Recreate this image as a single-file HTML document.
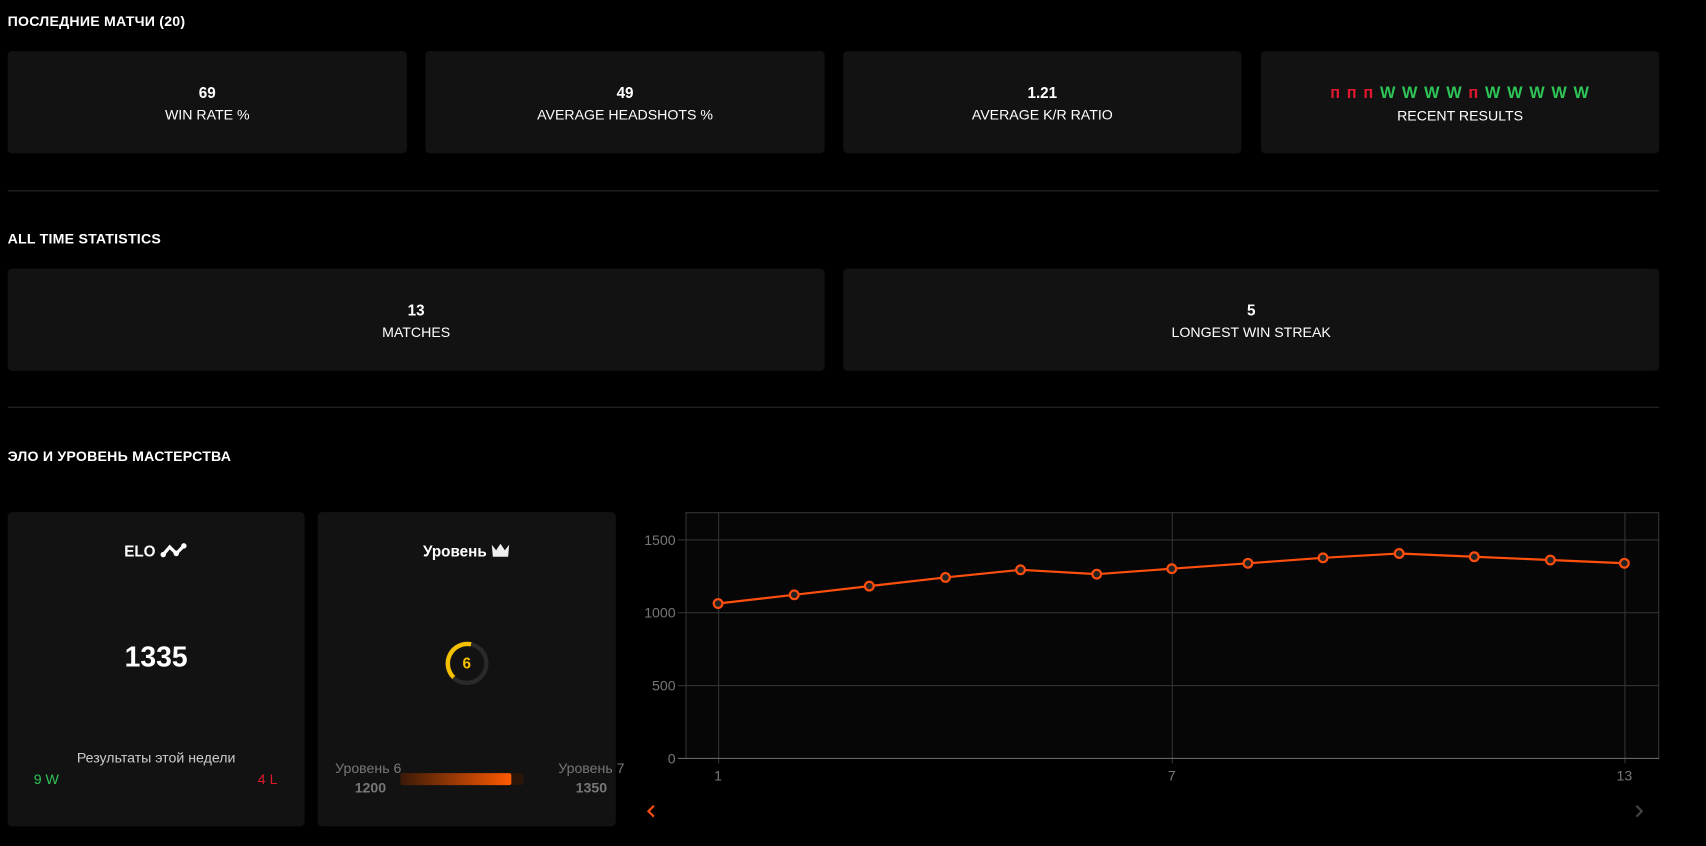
<!DOCTYPE html>
<html><head><meta charset="utf-8"><style>
html,body{margin:0;padding:0;background:#000;width:1706px;height:846px;overflow:hidden}
#w{position:absolute;left:0;top:0;width:1568px;height:778px;transform:scale(1.0880,1.0874);transform-origin:0 0;font-family:"Liberation Sans","DejaVu Sans",sans-serif;color:#fff}
.h{position:absolute;left:7px;font-weight:bold;font-size:13px;letter-spacing:0.2px}
.c{position:absolute;background:#121212;border-radius:4px;text-align:center}
.c b{display:block;font-size:14px;margin-top:30px}
.c span{display:block;font-size:13px;margin-top:5px}
.hr{position:absolute;left:7px;width:1518px;height:1px;background:#2a2a2a}
.r{color:#e0182d}.g{color:#2fc457}
</style></head><body><div id="w">
<div class="h" style="top:12px">ПОСЛЕДНИЕ МАТЧИ (20)</div>
<div class="c" style="left:7px;top:47px;width:367px;height:94px"><b>69</b><span>WIN RATE %</span></div>
<div class="c" style="left:391px;top:47px;width:367px;height:94px"><b>49</b><span>AVERAGE HEADSHOTS %</span></div>
<div class="c" style="left:775px;top:47px;width:366px;height:94px"><b>1.21</b><span>AVERAGE K/R RATIO</span></div>
<div class="c" style="left:1159px;top:47px;width:366px;height:94px"><b style="font-size:15px;letter-spacing:1px"><i class="r" style="font-style:normal">п п п </i><i class="g" style="font-style:normal">W W W W </i><i class="r" style="font-style:normal">п </i><i class="g" style="font-style:normal">W W W W W</i></b><span>RECENT RESULTS</span></div>
<div class="hr" style="top:175px"></div>
<div class="h" style="top:212px">ALL TIME STATISTICS</div>
<div class="c" style="left:7px;top:247px;width:751px;height:94px"><b>13</b><span>MATCHES</span></div>
<div class="c" style="left:775px;top:247px;width:750px;height:94px"><b>5</b><span>LONGEST WIN STREAK</span></div>
<div class="hr" style="top:374px"></div>
<div class="h" style="top:412px">ЭЛО И УРОВЕНЬ МАСТЕРСТВА</div>
<div class="c" style="left:7px;top:471px;width:273px;height:289px">
 <div style="position:absolute;top:28px;width:100%;font-weight:bold;font-size:14px">ELO <svg width="26" height="14" viewBox="0 0 26 14" style="vertical-align:-1px"><path d="M3 11 L9 4 L15 10 L22 3" stroke="#fff" stroke-width="3" fill="none"/><circle cx="3" cy="11" r="2.5" fill="#fff"/><circle cx="15" cy="10" r="2.5" fill="#fff"/><circle cx="22" cy="3" r="2.5" fill="#fff"/></svg></div>
 <div style="position:absolute;top:118px;width:100%;font-weight:bold;font-size:26px">1335</div>
 <div style="position:absolute;top:218px;width:100%;font-size:13px;color:#ccc">Результаты этой недели</div>
 <div class="g" style="position:absolute;top:238px;left:24px;font-size:13px">9 W</div>
 <div class="r" style="position:absolute;top:238px;right:25px;font-size:13px">4 L</div>
</div>
<div class="c" style="left:292px;top:471px;width:274px;height:289px">
 <div style="position:absolute;top:28px;width:100%;font-weight:bold;font-size:14px">Уровень <svg width="18" height="14" viewBox="0 0 18 14" style="vertical-align:-1px"><path d="M1 2 L5 7 L9 1 L13 7 L17 2 L16 13 L2 13Z" fill="#eee"/></svg></div>
 <svg style="position:absolute;left:115px;top:117px" width="44" height="44" viewBox="0 0 44 44"><circle cx="22" cy="22" r="18" stroke="#2a2a2a" stroke-width="4" fill="none"/><path d="M10 35 A18 18 0 0 1 26 4.5" stroke="#f5c000" stroke-width="4" fill="none"/><text x="22" y="27" text-anchor="middle" font-size="14" font-weight="bold" fill="#f5c000" font-family="Liberation Sans">6</text></svg>
 <div style="position:absolute;left:16px;top:228px;font-size:13px;color:#777">Уровень 6</div>
 <div style="position:absolute;left:34px;top:246px;font-size:13px;color:#777;font-weight:bold">1200</div>
 <div style="position:absolute;right:-8px;top:228px;font-size:13px;color:#777">Уровень 7</div>
 <div style="position:absolute;right:8px;top:246px;font-size:13px;color:#777;font-weight:bold">1350</div>
 <div style="position:absolute;left:76px;top:240px;width:113px;height:11px;background:#2a1508;border-radius:2px"><div style="width:102px;height:11px;border-radius:2px;background:linear-gradient(90deg,#3a1a08,#ff5a00)"></div></div>
</div>
<svg style="position:absolute;left:580px;top:460px" width="960" height="310" viewBox="580 460 960 310" font-family="Liberation Sans">
 <rect x="630" y="471" width="895" height="226" fill="#060606"/>
 <g stroke="#333" stroke-width="1">
  <line x1="630" y1="471.5" x2="1525" y2="471.5"/><line x1="630" y1="496.5" x2="1525" y2="496.5"/><line x1="630" y1="563.5" x2="1525" y2="563.5"/><line x1="630" y1="630.5" x2="1525" y2="630.5"/>
  <line x1="630.5" y1="471" x2="630.5" y2="697"/><line x1="660.5" y1="471" x2="660.5" y2="702"/><line x1="1077.5" y1="471" x2="1077.5" y2="702"/><line x1="1493.5" y1="471" x2="1493.5" y2="702"/><line x1="1524.5" y1="471" x2="1524.5" y2="697"/>
  <line x1="623" y1="496.5" x2="630" y2="496.5"/><line x1="623" y1="563.5" x2="630" y2="563.5"/><line x1="623" y1="630.5" x2="630" y2="630.5"/>
 </g>
 <line x1="623" y1="697.5" x2="1525" y2="697.5" stroke="#666"/>
 <g fill="#777" font-size="13" text-anchor="end"><text x="621" y="501">1500</text><text x="621" y="568">1000</text><text x="621" y="635">500</text><text x="621" y="702">0</text></g>
 <g fill="#777" font-size="13" text-anchor="middle"><text x="660" y="718">1</text><text x="1077" y="718">7</text><text x="1493" y="718">13</text></g>
 <polyline points="660,555 730,547 799,539 869,531 938,524 1008,528 1077,523 1147,518 1216,513 1286,509 1355,512 1425,515 1493,518" fill="none" stroke="#ff4f0f" stroke-width="2"/>
 <g fill="#222" stroke="#ff4f0f" stroke-width="2"><circle cx="660" cy="555" r="4"/><circle cx="730" cy="547" r="4"/><circle cx="799" cy="539" r="4"/><circle cx="869" cy="531" r="4"/><circle cx="938" cy="524" r="4"/><circle cx="1008" cy="528" r="4"/><circle cx="1077" cy="523" r="4"/><circle cx="1147" cy="518" r="4"/><circle cx="1216" cy="513" r="4"/><circle cx="1286" cy="509" r="4"/><circle cx="1355" cy="512" r="4"/><circle cx="1425" cy="515" r="4"/><circle cx="1493" cy="518" r="4"/></g>
 <path d="M601 741 L596 746 L601 751" stroke="#ff4f0f" stroke-width="2" fill="none"/>
 <path d="M1504 741 L1509 746 L1504 751" stroke="#444" stroke-width="2" fill="none"/>
</svg>
</div></body></html>
